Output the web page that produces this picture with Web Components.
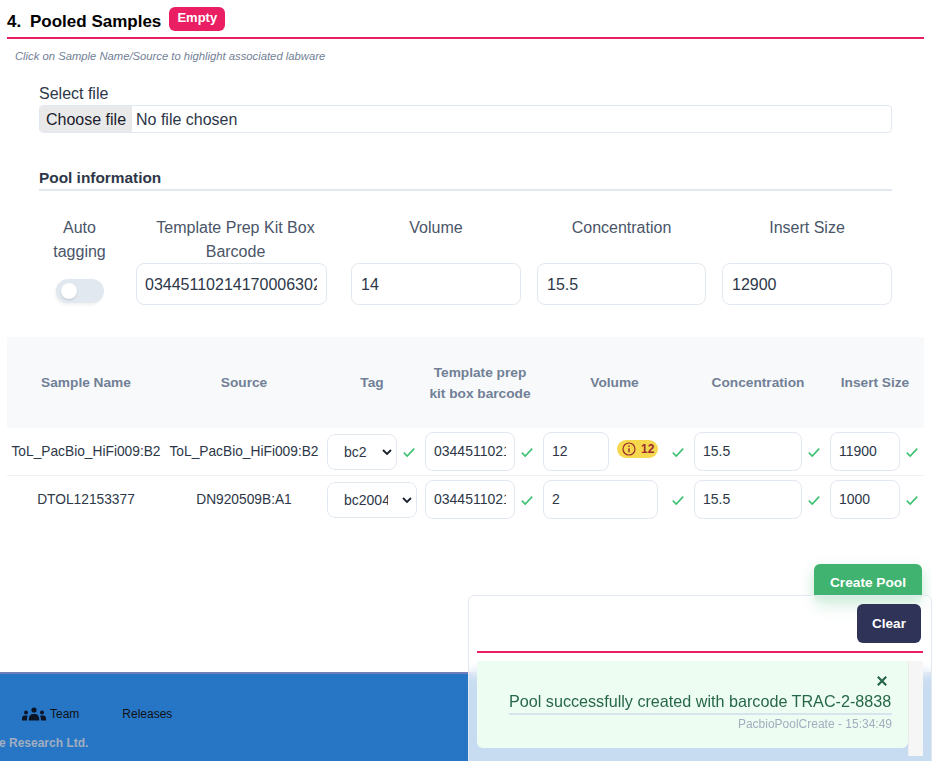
<!DOCTYPE html>
<html>
<head>
<meta charset="utf-8">
<title>Pooled Samples</title>
<style>
    html, body { margin: 0; padding: 0; }
    body {
        width: 932px;
        height: 761px;
        overflow: hidden;
        position: relative;
        font-family: "Liberation Sans", Arial, sans-serif;
        color: #2d3748;
        background: #fff;
    }
</style>
</head>
<body>
<pool-page>
    <section-title number="4." text="Pooled Samples" badge="Empty"></section-title>
    <p slot="hint">Click on Sample Name/Source to highlight associated labware</p>
    <file-field slot="file" label="Select file"></file-field>
    <pool-info slot="info"></pool-info>
    <pool-table slot="table">
        <pool-row sample="ToL_PacBio_HiFi009:B2" source="ToL_PacBio_HiFi009:B2" tag="bc2" tagcheck="true" barcode="03445110214170006302" volume="12" warn="12" concentration="15.5" insert="11900"></pool-row>
        <pool-row sample="DTOL12153377" source="DN920509B:A1" tag="bc2004" barcode="03445110214170006302" volume="2" concentration="15.5" insert="1000"></pool-row>
    </pool-table>
    <create-button slot="action">Create Pool</create-button>
</pool-page>
<page-footer></page-footer>
<message-panel>
    <toast-message text="Pool successfully created with barcode TRAC-2-8838" meta="PacbioPoolCreate - 15:34:49"></toast-message>
</message-panel>

<script>
const checkIcon = `<svg class="check" width="12" height="12" viewBox="0 0 12 12" fill="none" stroke="#3cc270" stroke-width="1.6"><path d="M.8 6.6 4.2 10 11.2 2.6"/></svg>`;

class PoolPage extends HTMLElement {
    constructor() {
        super();
        this.attachShadow({ mode: 'open' }).innerHTML = `
<style>
    :host { display: block; height: 672px; padding: 0 8px 0 7px; box-sizing: border-box; }
    .hint { margin-top: 9px; padding-left: 8px; height: 17px; }
    .form { margin: 17px 32px 0; }
    .table { margin-top: 32px; }
    .action { display: flex; justify-content: flex-end; margin-top: 40px; padding-right: 2px; }
    ::slotted(p) { margin: 0; font-size: 11.25px; line-height: 16px; font-style: italic; color: #718096; }
</style>
<slot></slot>
<div class="hint"><slot name="hint"></slot></div>
<div class="form"><slot name="file"></slot><slot name="info"></slot></div>
<div class="table"><slot name="table"></slot></div>
<div class="action"><slot name="action"></slot></div>`;
    }
}

class SectionTitle extends HTMLElement {
    constructor() {
        super();
        this.attachShadow({ mode: 'open' }).innerHTML = `
<style>
    :host { display: flex; align-items: flex-start; height: 37px; border-bottom: 2px solid #e91e63; box-sizing: content-box; color: #000; }
    .num { font-size: 17px; font-weight: bold; line-height: 20px; margin-top: 12px; width: 23px; }
    .text { font-size: 17px; font-weight: bold; line-height: 20px; margin-top: 12px; }
    .badge { margin: 7px 0 0 8px; height: 24px; width: 56px; border-radius: 6px; background: #e91e63; color: #fff; font-size: 13px; font-weight: bold; line-height: 22px; text-align: center; }
</style>
<span class="num"></span><span class="text"></span><span class="badge"></span>`;
    }

    connectedCallback() {
        this.shadowRoot.querySelector('.num').textContent = this.getAttribute('number');
        this.shadowRoot.querySelector('.text').textContent = this.getAttribute('text');
        this.shadowRoot.querySelector('.badge').textContent = this.getAttribute('badge');
    }
}

class FileField extends HTMLElement {
    constructor() {
        super();
        this.attachShadow({ mode: 'open' }).innerHTML = `
<style>
    :host { display: block; font-size: 16px; }
    label { display: block; line-height: 24px; color: #2d3748; height: 23px; }
    .box { display: flex; align-items: center; height: 28px; border: 1px solid #e2e8f0; border-radius: 4px; box-sizing: border-box; overflow: hidden; }
    .btn { display: flex; align-items: center; height: 100%; padding: 1px 0 0 6px; background: #e9e9e9; color: #1a202c; width: 92px; box-sizing: border-box; white-space: nowrap; flex: none; }
    .name { margin-left: 4px; padding-top: 1px; color: #2d3748; white-space: nowrap; }
</style>
<label></label>
<div class="box"><span class="btn">Choose file</span><span class="name">No file chosen</span></div>`;
    }

    connectedCallback() {
        this.shadowRoot.querySelector('label').textContent = this.getAttribute('label');
    }
}

class PoolInfo extends HTMLElement {
    constructor() {
        super();
        this.attachShadow({ mode: 'open' }).innerHTML = `
<style>
    :host { display: block; margin-top: 33px; font-size: 16px; }
    h3 { margin: 0 0 25px; font-size: 15.4px; line-height: 22px; padding-top: 1px; height: 22px; font-weight: bold; color: #2d3748; border-bottom: 2px solid #e2e8f0; box-sizing: content-box; }
    .grid { display: grid; grid-template-columns: 81px 199px 170px 169px 170px; column-gap: 16px; }
    .field { display: flex; flex-direction: column; }
    .label { height: 47px; line-height: 24px; text-align: center; color: #4a5568; }
    input { height: 42px; width: 100%; box-sizing: border-box; border: 1px solid #e2e8f0; border-radius: 8px; padding: 2px 9px 0; font: 16px "Liberation Sans", Arial, sans-serif; color: #2d3748; background: #fff; outline: none; }
    .barcode input { width: 191px; padding-left: 8px; }
    .toggle { width: 48px; height: 24px; margin: 16px 0 0 17px; border-radius: 12px; background: #e2e8f0; padding: 4px 5px; box-sizing: border-box; box-shadow: -1px 2px 3px rgba(0,0,0,.06); }
    .knob { display: block; width: 16px; height: 16px; border-radius: 50%; background: #fff; box-shadow: 0 1px 2px rgba(0,0,0,.15); }
</style>
<h3>Pool information</h3>
<div class="grid">
    <div class="field"><div class="label">Auto tagging</div><div class="toggle"><span class="knob"></span></div></div>
    <div class="field barcode"><div class="label">Template Prep Kit Box Barcode</div><input value="03445110214170006302"></div>
    <div class="field"><div class="label">Volume</div><input value="14"></div>
    <div class="field"><div class="label">Concentration</div><input value="15.5"></div>
    <div class="field"><div class="label">Insert Size</div><input value="12900"></div>
</div>`;
    }
}

const columns = '158px 158px 98px 118px 151px 136px 98px';

class PoolTable extends HTMLElement {
    constructor() {
        super();
        this.attachShadow({ mode: 'open' }).innerHTML = `
<style>
    :host { display: block; }
    .head { display: grid; grid-template-columns: ${columns}; height: 91px; align-items: center; background: #f8f9fb; font-size: 13.7px; font-weight: bold; line-height: 21px; color: #718096; text-align: center; }
</style>
<div class="head">
    <div>Sample Name</div><div>Source</div><div>Tag</div><div>Template prep<br>kit box barcode</div><div>Volume</div><div>Concentration</div><div>Insert Size</div>
</div>
<slot></slot>`;
    }
}

class PoolRow extends HTMLElement {
    constructor() {
        super();
        this.attachShadow({ mode: 'open' }).innerHTML = `
<style>
    :host { display: grid; grid-template-columns: ${columns}; height: 48px; align-items: center; box-sizing: border-box; border-bottom: 1px solid #edf2f7; font-size: 13.75px; color: #2d3748; }
    :host(:last-of-type) { border-bottom-color: transparent; }
    .text { text-align: center; white-space: nowrap; }
    .cell { display: flex; align-items: center; padding: 0 6px 0 4px; }
    input, select { box-sizing: border-box; min-width: 0; flex: 1; background: #fff; border: 1px solid #e2e8f0; border-radius: 8px; font: 14px "Liberation Sans", Arial, sans-serif; color: #2d3748; outline: none; }
    input { height: 39px; padding: 0 8px 1px; }
    .pick { position: relative; display: flex; flex: 1; }
    .pick.wide { margin-right: -2px; }
    select { appearance: none; -webkit-appearance: none; width: 100%; height: 36px; padding: 0 28px 0 16px; }
    .pick svg { position: absolute; right: 5px; top: 15px; pointer-events: none; }
    .check { flex: none; margin-left: 6px; }
    .badge { flex: none; display: flex; align-items: center; gap: 5px; height: 18px; width: 41px; margin: -5px 0 0 8px; padding-left: 5px; box-sizing: border-box; border-radius: 9px; background: #f6d84f; color: #9b2c2c; font-size: 12px; font-weight: bold; }
    .badge svg { flex: none; }
</style>
<div class="text sample"></div>
<div class="text source"></div>
<div class="cell"><div class="pick"><select><option class="tag"></option></select><svg width="10" height="6" viewBox="0 0 10 6" fill="none" stroke="#1a202c" stroke-width="1.8"><path d="M1 1 5 5 9 1"/></svg></div><span class="tagcheck"></span></div>
<div class="cell"><input class="barcode">${checkIcon}</div>
<div class="cell"><input class="volume"><span class="warn"></span><span style="flex:none;width:8px"></span>${checkIcon}</div>
<div class="cell"><input class="concentration">${checkIcon}</div>
<div class="cell"><input class="insert">${checkIcon}</div>`;
    }

    connectedCallback() {
        const root = this.shadowRoot;
        root.querySelector('.sample').textContent = this.getAttribute('sample');
        root.querySelector('.source').textContent = this.getAttribute('source');
        root.querySelector('.tag').textContent = this.getAttribute('tag');
        root.querySelector('.barcode').value = this.getAttribute('barcode');
        root.querySelector('.volume').value = this.getAttribute('volume');
        root.querySelector('.concentration').value = this.getAttribute('concentration');
        root.querySelector('.insert').value = this.getAttribute('insert');
        if (this.getAttribute('tagcheck') === 'true') root.querySelector('.tagcheck').outerHTML = checkIcon;
        else root.querySelector('.pick').classList.add('wide');
        if (this.hasAttribute('warn')) {
            root.querySelector('.warn').outerHTML = `<span class="badge"><svg width="14" height="14" viewBox="0 0 14 14" fill="none" stroke="#9b2c2c" stroke-width="1.2"><circle cx="7" cy="7" r="6"/><path d="M7 6.2v4" stroke-width="1.4"/><path d="M7 3.6v1.3" stroke-width="1.4"/></svg>${this.getAttribute('warn')}</span>`;
        }
    }
}

class CreateButton extends HTMLElement {
    constructor() {
        super();
        this.attachShadow({ mode: 'open' }).innerHTML = `
<style>
    :host { display: block; width: 108px; height: 39px; border-radius: 6px; background: #3fb36f; color: #fff; font-size: 13.7px; font-weight: bold; line-height: 38px; text-align: center; box-shadow: 0 6px 14px rgba(72,187,120,.35); }
</style>
<slot></slot>`;
    }
}

class PageFooter extends HTMLElement {
    constructor() {
        super();
        this.attachShadow({ mode: 'open' }).innerHTML = `
<style>
    :host { display: block; height: 89px; box-sizing: border-box; border-top: 2px solid #6f7dbb; background: #2776c6; font-size: 12px; color: #111; }
    nav { display: flex; align-items: center; height: 16px; margin-top: 32px; padding-left: 22px; }
    a { display: flex; align-items: center; gap: 4px; }
    a + a { margin-left: 43px; }
    .copy { margin: 13px 0 0 -1px; line-height: 16px; font-weight: bold; color: #a0aec0; }
</style>
<nav>
    <a><svg width="24" height="14" viewBox="0 0 24 14" fill="#0b1526">
        <circle cx="12" cy="3" r="2.6"/><path d="M6.8 13.5V12c0-2.6 1.6-4.6 3.6-5h3.2c2 .4 3.6 2.4 3.6 5v1.5z"/>
        <circle cx="4" cy="5.6" r="2"/><path d="M0 13.5v-2c0-1.7 1-2.9 2.2-3h3l.6.4C5.2 9.4 5 10.7 5 12v1.5z"/>
        <circle cx="20" cy="5.6" r="2"/><path d="M24 13.5v-2c0-1.7-1-2.9-2.2-3h-3l-.6.4c.6 1.5.8 2.8.8 4.1v.5z"/>
    </svg>Team</a>
    <a>Releases</a>
</nav>
<div class="copy">e Research Ltd.</div>`;
    }
}

class MessagePanel extends HTMLElement {
    constructor() {
        super();
        this.attachShadow({ mode: 'open' }).innerHTML = `
<style>
    :host { display: block; position: absolute; left: 468px; top: 595px; width: 464px; height: 180px; box-sizing: border-box; padding: 8px; border: 1px solid #e2e8f0; border-radius: 6px; background: rgba(255,255,255,.75); -webkit-backdrop-filter: blur(6px); backdrop-filter: blur(6px); }
    .top { display: flex; justify-content: flex-end; height: 47px; border-bottom: 2px solid #e91e63; margin-bottom: 8px; }
    button { width: 64px; height: 39px; margin-right: 2px; border: 0; border-radius: 6px; background: #2f3358; color: #fff; font: bold 13.5px "Liberation Sans", Arial, sans-serif; }
    .list { display: flex; height: 95px; }
    .items { flex: 1; }
    .track { flex: none; width: 15px; background: #f6f6f6; border-left: 1px solid #ececec; box-sizing: border-box; }
</style>
<div class="top"><button>Clear</button></div>
<div class="list"><div class="items"><slot></slot></div><div class="track"></div></div>`;
    }
}

class ToastMessage extends HTMLElement {
    constructor() {
        super();
        this.attachShadow({ mode: 'open' }).innerHTML = `
<style>
    :host { display: block; height: 87px; box-sizing: border-box; padding: 15px 16px 0 32px; border-radius: 0 0 6px 6px; background: #eefdf1; color: #276749; }
    .close { display: flex; justify-content: flex-end; height: 10px; padding-right: 5px; }
    .text { margin-top: 4px; font-size: 16.17px; line-height: 22px; height: 23px; border-bottom: 2px solid #d9e3ee; white-space: nowrap; }
    .meta { margin-top: 1px; font-size: 12px; line-height: 16px; text-align: right; color: #a0aec0; }
</style>
<div class="close"><svg width="10" height="10" viewBox="0 0 10 10" fill="none" stroke="#276749" stroke-width="2.2"><path d="M.8.8 9.2 9.2M9.2.8.8 9.2"/></svg></div>
<div class="text"></div>
<div class="meta"></div>`;
    }

    connectedCallback() {
        this.shadowRoot.querySelector('.text').textContent = this.getAttribute('text');
        this.shadowRoot.querySelector('.meta').textContent = this.getAttribute('meta');
    }
}

window.customElements.define('pool-page', PoolPage);
window.customElements.define('section-title', SectionTitle);
window.customElements.define('file-field', FileField);
window.customElements.define('pool-info', PoolInfo);
window.customElements.define('pool-table', PoolTable);
window.customElements.define('pool-row', PoolRow);
window.customElements.define('create-button', CreateButton);
window.customElements.define('page-footer', PageFooter);
window.customElements.define('message-panel', MessagePanel);
window.customElements.define('toast-message', ToastMessage);
</script>
</body>
</html>
